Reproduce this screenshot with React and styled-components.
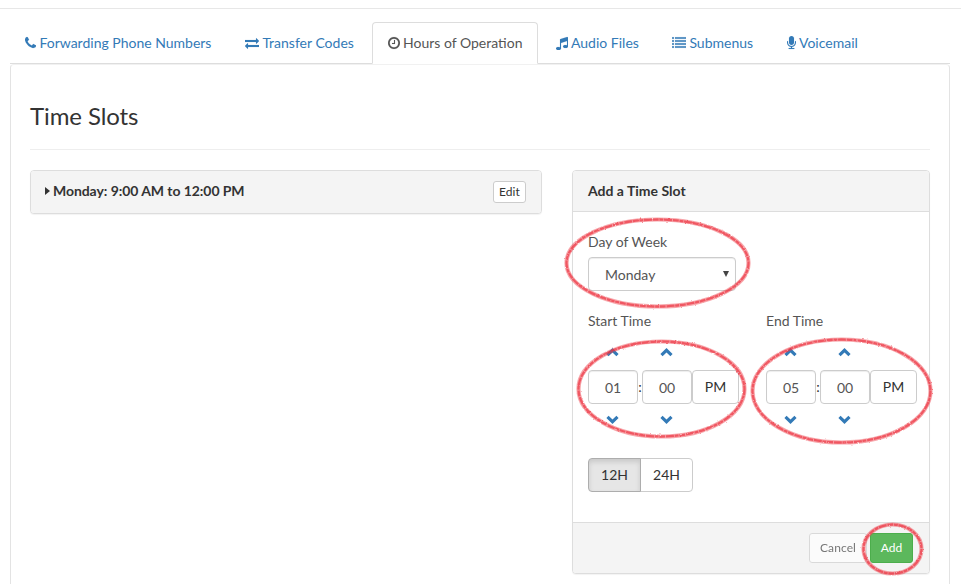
import React from "react";
import styled, { createGlobalStyle, css } from "styled-components";

const GlobalStyle = createGlobalStyle`
  *, *::before, *::after { box-sizing: border-box; }
  html, body { margin: 0; height: 100%; overflow: hidden; background: #fff; }
  body { font-family: Lato, "Helvetica Neue", Arial, sans-serif; font-size: 14px; line-height: 20px; color: #333; }
  button, input { font: inherit; margin: 0; }
`;

const Page = styled.main`
  position: relative;
  height: 584px;
  padding: 8px 0 0;
  overflow: hidden;
  display: flex;
  flex-direction: column;
`;

const TopRule = styled.div`
  flex: none;
  height: 1px;
  background: #e7e7e7;
  margin-bottom: 13px;
`;

const Tabs = styled.nav`
  display: flex;
  flex: none;
  gap: 2px;
  height: 42px;
  margin: 0 11px 0 10px;
  border-bottom: 1px solid #ddd;
  border-radius: 4px 4px 0 0;
`;

const Tab = styled.a`
  display: flex;
  flex: none;
  width: ${(p) => p.$width}px;
  height: 42px;
  padding: 10px 0 0 ${(p) => p.$inset}px;
  border: 1px solid transparent;
  border-radius: 4px 4px 0 0;
  color: #337ab7;
  white-space: nowrap;
  ${(p) =>
    p.$active &&
    css`
      color: #555;
      background: #fff;
      border-color: #ddd #ddd #fff;
    `}
`;

const TabIcon = styled.svg`
  flex: none;
  height: 14px;
  width: ${(p) => p.$width}px;
  margin: 3px 3px 0 0;
  fill: currentColor;
  stroke: currentColor;
  stroke-width: 15;
`;

const Content = styled.section`
  flex: 1;
  margin: 0 11px 0 10px;
  padding: 38px 19px 0;
  border: 1px solid #e3e3e3;
  border-top-color: #f1f1f1;
  border-bottom: 0;
  border-radius: 4px 4px 0 0;
`;

const Title = styled.h3`
  margin: 0;
  height: 47px;
  font-size: 24px;
  font-weight: 400;
  line-height: 26px;
  letter-spacing: -0.1px;
  border-bottom: 1px solid #eee;
`;

const Columns = styled.div`
  display: grid;
  grid-template-columns: 512px 358px;
  gap: 30px;
  align-items: start;
  margin-top: 20px;
`;

const Panel = styled.article`
  border: 1px solid #ddd;
  border-radius: 4px;
  background: #fff;
  box-shadow: 0 1px 1px rgba(0, 0, 0, 0.05);
  overflow: hidden;
`;

const SlotRow = styled.header`
  display: flex;
  align-items: center;
  height: 42px;
  padding: 0 15px 2px 14px;
  background: #f4f4f4;
  font-weight: 700;
  letter-spacing: -0.07px;
`;

const Caret = styled.i`
  border: 4px solid transparent;
  border-left: 5px solid #333;
  border-right: 0;
  margin: 0 3px 0 0;
`;

const EditButton = styled.button`
  width: 33px;
  height: 22px;
  margin: 2px 0 0 auto;
  padding: 0;
  border: 1px solid #ccc;
  border-radius: 3px;
  background: #fff;
  color: #333;
  font-size: 12px;
  font-weight: 400;
  line-height: 18px;
  letter-spacing: 0.1px;
`;

const PanelHeading = styled.header`
  height: 41px;
  padding: 10px 15px;
  background: #f4f4f4;
  border-bottom: 1px solid #ddd;
  font-weight: 700;
`;

const PanelBody = styled.div`
  height: 310px;
  padding: 20px 15px 0;
`;

const Label = styled.div`
  height: 25px;
  color: #555;
`;

const Select = styled.div`
  display: flex;
  align-items: center;
  justify-content: space-between;
  width: 148px;
  height: 34px;
  padding: 2px 6px 0 16px;
  border: 1px solid #ccc;
  border-radius: 4px;
  box-shadow: inset 0 1px 1px rgba(0, 0, 0, 0.075);
  color: #555;
`;

const SelectArrow = styled.i`
  border: 3.5px solid transparent;
  border-top: 6px solid #444;
  border-bottom: 0;
  margin-top: -3px;
`;

const TimeColumns = styled.div`
  display: grid;
  grid-template-columns: 178px 151px;
  margin-top: 20px;
`;

const TimeGrid = styled.div`
  display: grid;
  grid-template-columns: 50px 4px 50px 47px;
  grid-template-rows: 34px 34px 34px;
  align-items: center;
`;

const Step = styled.button`
  display: flex;
  align-items: center;
  justify-content: center;
  grid-column: ${(p) => p.$col};
  grid-row: ${(p) => p.$row};
  height: 34px;
  padding: 0 1px 2px 0;
  border: 0;
  background: none;
  color: #337ab7;
`;

const box = css`
  height: 34px;
  border: 1px solid #ccc;
  border-radius: 4px;
  background: #fff;
  text-align: center;
  padding: 0;
`;

const TimeInput = styled.input`
  ${box}
  grid-column: ${(p) => p.$col};
  grid-row: 2;
  width: 50px;
  color: #555;
  padding-top: 1px;
  box-shadow: inset 0 1px 1px rgba(0, 0, 0, 0.075);
`;

const Colon = styled.span`
  grid-column: 2;
  grid-row: 2;
  text-align: center;
`;

const Meridian = styled.button`
  ${box}
  grid-column: 4;
  grid-row: 2;
  width: 47px;
  color: #333;
`;

const Toggle = styled.div`
  display: flex;
  margin-top: 20px;
`;

const ToggleButton = styled.button`
  ${box}
  width: 53px;
  color: #333;
  ${(p) =>
    p.$pressed
      ? css`
          z-index: 1;
          border-color: #adadad;
          border-radius: 4px 0 0 4px;
          background: #e6e6e6;
          box-shadow: inset 0 3px 5px rgba(0, 0, 0, 0.125);
        `
      : css`
          border-radius: 0 4px 4px 0;
          margin-left: -1px;
        `}
`;

const PanelFooter = styled.footer`
  display: flex;
  justify-content: flex-end;
  gap: 3px;
  height: 51px;
  padding: 10px 16px 10px 15px;
  border-top: 1px solid #ddd;
  background: #f4f4f4;
`;

const ActionButton = styled.button`
  width: ${(p) => (p.$primary ? 43 : 58)}px;
  height: 30px;
  padding: 0;
  border: 1px solid ${(p) => (p.$primary ? "#4cae4c" : "#ccc")};
  border-radius: 3px;
  background: ${(p) => (p.$primary ? "#5cb85c" : "#fff")};
  color: ${(p) => (p.$primary ? "#fff" : "#333")};
  opacity: ${(p) => (p.$primary ? 1 : 0.65)};
  font-size: 12px;
  line-height: 18px;
  letter-spacing: 0.1px;
`;

const Highlights = styled.svg`
  position: absolute;
  inset: 0;
  width: 961px;
  height: 584px;
  pointer-events: none;
`;

const TABS = [
  {
    label: "Forwarding Phone Numbers", width: 218, inset: 14.4, iconWidth: 11, viewBox: "0 0 1408 1792",
    d: "M1408 1240q0 27-10 70.5t-21 68.5q-21 50-122 106-94 51-186 51-27 0-53-3.5t-57-12.5-47-14.5-55.5-20.5-49.5-18q-98-35-175-83-127-79-264-216t-216-264q-48-77-83-175-3-9-18-49.5t-20.5-55.5-14.5-47-12.5-57-3.5-53q0-92 51-186 56-101 106-122 25-11 68.5-21t70.5-10q14 0 21 3 18 6 53 76 11 19 30 54t35 63.500 31 53.500q3 4 17.500 25t21.500 35.500 7 28.500q0 20-28.500 50t-62 55-62 53-28.500 46q0 9 5 22.500t8.500 20.500 14 24 11.500 19q76 137 174 235t235 174q2 1 19 11.500t24 14 20.500 8.500 22.500 5q18 0 46-28.500t53-62 55-62 50-28.500q14 0 28.500 7t35.500 21.500 25 17.500q25 15 53.500 31t63.500 35 54 30q70 35 76 53 3 7 3 21z",
  },
  {
    label: "Transfer Codes", width: 140, inset: 14.4, iconWidth: 14, viewBox: "0 0 1792 1792",
    d: "M1792 1184v192q0 13-9.500 22.500t-22.500 9.500h-1376v192q0 13-9.500 22.500t-22.500 9.500q-12 0-24-10l-319-320q-9-9-9-22 0-14 9-23l320-320q9-9 23-9 13 0 22.500 9.500t9.500 22.500v192h1376q13 0 22.500 9.500t9.500 22.500zm0-544q0 14-9 23l-320 320q-9 9-23 9-13 0-22.500-9.500t-9.500-22.500v-192h-1376q-13 0-22.500-9.500t-9.500-22.500v-192q0-13 9.500-22.500t22.500-9.500h1376v-192q0-14 9-23t23-9q12 0 24 10l319 319q9 9 9 23z",
  },
  {
    label: "Hours of Operation", width: 166, inset: 15, iconWidth: 12, viewBox: "128 0 1536 1792", active: true,
    d: "M1024 544v448q0 14-9 23t-23 9h-320q-14 0-23-9t-9-23v-64q0-14 9-23t23-9h224v-352q0-14 9-23t23-9h64q14 0 23 9t9 23zm416 352q0-148-73-273t-198-198-273-73-273 73-198 198-73 273 73 273 198 198 273 73 273-73 198-198 73-273zm224 0q0 209-103 385.500t-279.500 279.500-385.500 103-385.500-103-279.500-279.500-103-385.500 103-385.500 279.500-279.500 385.500-103 385.500 103 279.500 279.500 103 385.500z",
  },
  {
    label: "Audio Files", width: 114, inset: 15, iconWidth: 12, viewBox: "128 0 1536 1792",
    d: "M1664 224v1120q0 50-34 89t-86 60.500-103.500 32-96.500 10.500-96.500-10.500-103.500-32-86-60.500-34-89 34-89 86-60.500 103.500-32 96.500-10.500q105 0 192 39v-537l-768 237v709q0 50-34 89t-86 60.500-103.500 32-96.500 10.500-96.500-10.500-103.500-32-86-60.500-34-89 34-89 86-60.500 103.500-32 96.500-10.500q105 0 192 39v-967q0-31 19-56.500t49-35.500l832-256q12-4 28-4 40 0 68 28t28 68z",
  },
  {
    label: "Submenus", width: 112, inset: 15.4, iconWidth: 14, viewBox: "0 0 1792 1792",
    d: "M0 1312h256v192H0zM0 928h256v192H0zM0 544h256v192H0zM384 1312h1408v192H384zM0 160h256v192H0zM384 928h1408v192H384zM384 544h1408v192H384zM384 160h1408v192H384z",
  },
  {
    label: "Voicemail", width: 104, inset: 16, iconWidth: 9, viewBox: "320 0 1152 1792",
    d: "M1472 704v128q0 221-147.500 384.500t-364.500 187.500v132h256q26 0 45 19t19 45-19 45-45 19h-640q-26 0-45-19t-19-45 19-45 45-19h256v-132q-217-24-364.500-187.500t-147.500-384.500v-128q0-26 19-45t45-19 45 19 19 45v128q0 185 131.500 316.500t316.500 131.500 316.500-131.500 131.500-316.500v-128q0-26 19-45t45-19 45 19 19 45zm-256-384v512q0 132-94 226t-226 94-226-94-94-226v-512q0-132 94-226t226-94 226 94 94 226z",
  },
];

const RINGS = [
  { cx: 657.5, cy: 263, rx: 91, ry: 43.5 },
  { cx: 661.5, cy: 389, rx: 83, ry: 47.5 },
  { cx: 841.5, cy: 391, rx: 89, ry: 51.5 },
  { cx: 892.5, cy: 549, rx: 29, ry: 24.5 },
];

function Chevron({ down }) {
  return (
    <svg width="13" height="10" viewBox="0 0 13 10" fill="currentColor">
      <path d={down ? "M0.4 3 2.6 0.8 6.500 4.500 10.400 0.800 12.600 3 6.500 9z" : "M0.4 7 2.6 9.200 6.500 5.500 10.400 9.200 12.600 7 6.500 1z"} />
    </svg>
  );
}

function TimePicker({ label, hour, minute }) {
  return (
    <div>
      <Label>{label}</Label>
      <TimeGrid>
        <Step $col={1} $row={1}><Chevron /></Step>
        <Step $col={3} $row={1}><Chevron /></Step>
        <TimeInput $col={1} defaultValue={hour} />
        <Colon>:</Colon>
        <TimeInput $col={3} defaultValue={minute} />
        <Meridian>PM</Meridian>
        <Step $col={1} $row={3}><Chevron down /></Step>
        <Step $col={3} $row={3}><Chevron down /></Step>
      </TimeGrid>
    </div>
  );
}

export default function App() {
  return (
    <Page>
      <GlobalStyle />
      <TopRule />
      <Tabs>
        {TABS.map((t) => (
          <Tab key={t.label} $width={t.width} $inset={t.inset} $active={t.active}>
            <TabIcon $width={t.iconWidth} viewBox={t.viewBox}><path d={t.d} /></TabIcon>
            {t.label}
          </Tab>
        ))}
      </Tabs>
      <Content>
        <Title>Time Slots</Title>
        <Columns>
          <Panel>
            <SlotRow>
              <Caret />
              Monday: 9:00 AM to 12:00 PM
              <EditButton>Edit</EditButton>
            </SlotRow>
          </Panel>
          <Panel>
            <PanelHeading>Add a Time Slot</PanelHeading>
            <PanelBody>
              <Label>Day of Week</Label>
              <Select>Monday<SelectArrow /></Select>
              <TimeColumns>
                <TimePicker label="Start Time" hour="01" minute="00" />
                <TimePicker label="End Time" hour="05" minute="00" />
              </TimeColumns>
              <Toggle>
                <ToggleButton $pressed>12H</ToggleButton>
                <ToggleButton>24H</ToggleButton>
              </Toggle>
            </PanelBody>
            <PanelFooter>
              <ActionButton>Cancel</ActionButton>
              <ActionButton $primary>Add</ActionButton>
            </PanelFooter>
          </Panel>
        </Columns>
      </Content>
      <Highlights viewBox="0 0 961 584" fill="none">
        <filter id="chalk" x="-5%" y="-5%" width="110%" height="110%">
          <feTurbulence type="fractalNoise" baseFrequency="0.45" numOctaves="2" seed="4" result="noise" />
          <feDisplacementMap in="SourceGraphic" in2="noise" scale="2" xChannelSelector="R" yChannelSelector="G" />
        </filter>
        {RINGS.map((r) => (
          <g key={r.cx} filter="url(#chalk)">
            <ellipse {...r} stroke="#ee3c46" strokeWidth="4.2" opacity="0.45" />
            <ellipse {...r} stroke="#ec2f3a" strokeWidth="2.3" strokeDasharray="6 0.7 4 0.6 8 0.8" opacity="0.65" />
          </g>
        ))}
      </Highlights>
    </Page>
  );
}
